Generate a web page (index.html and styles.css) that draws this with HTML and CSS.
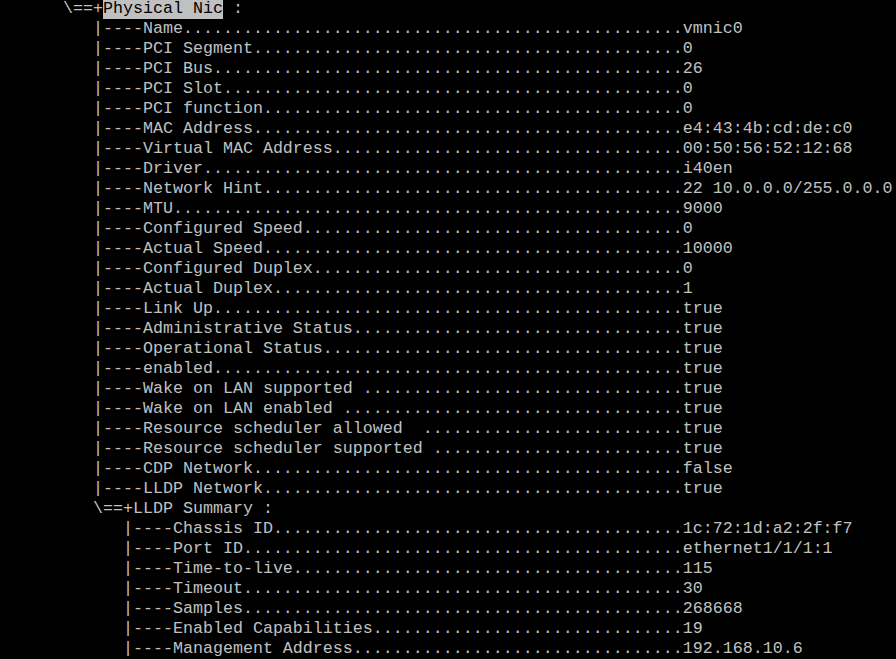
FILE: index.html
```html
<!DOCTYPE html>
<html>
<head>
<meta charset="utf-8">
<link rel="stylesheet" href="styles.css">
</head>
<body>
<div class="term">
<div class="ln">      \==+<span class="sel">Physical Nic</span> :</div>
<div class="ln">         |----Name..................................................vmnic0</div>
<div class="ln">         |----PCI Segment...........................................0</div>
<div class="ln">         |----PCI Bus...............................................26</div>
<div class="ln">         |----PCI Slot..............................................0</div>
<div class="ln">         |----PCI function..........................................0</div>
<div class="ln">         |----MAC Address...........................................e4:43:4b:cd:de:c0</div>
<div class="ln">         |----Virtual MAC Address...................................00:50:56:52:12:68</div>
<div class="ln">         |----Driver................................................i40en</div>
<div class="ln">         |----Network Hint..........................................22 10.0.0.0/255.0.0.0</div>
<div class="ln">         |----MTU...................................................9000</div>
<div class="ln">         |----Configured Speed......................................0</div>
<div class="ln">         |----Actual Speed..........................................10000</div>
<div class="ln">         |----Configured Duplex.....................................0</div>
<div class="ln">         |----Actual Duplex.........................................1</div>
<div class="ln">         |----Link Up...............................................true</div>
<div class="ln">         |----Administrative Status.................................true</div>
<div class="ln">         |----Operational Status....................................true</div>
<div class="ln">         |----enabled...............................................true</div>
<div class="ln">         |----Wake on LAN supported ................................true</div>
<div class="ln">         |----Wake on LAN enabled ..................................true</div>
<div class="ln">         |----Resource scheduler allowed  ..........................true</div>
<div class="ln">         |----Resource scheduler supported .........................true</div>
<div class="ln">         |----CDP Network...........................................false</div>
<div class="ln">         |----LLDP Network..........................................true</div>
<div class="ln">         \==+LLDP Summary :</div>
<div class="ln">            |----Chassis ID.........................................1c:72:1d:a2:2f:f7</div>
<div class="ln">            |----Port ID............................................ethernet1/1/1:1</div>
<div class="ln">            |----Time-to-live.......................................115</div>
<div class="ln">            |----Timeout............................................30</div>
<div class="ln">            |----Samples............................................268668</div>
<div class="ln">            |----Enabled Capabilities...............................19</div>
<div class="ln">            |----Management Address.................................192.168.10.6</div>
</div>
</body>
</html>
```
FILE: styles.css
```css
html, body {
  margin: 0;
  padding: 0;
  background: #000;
  overflow: hidden;
}
.term {
  margin-top: -1px;
  padding-left: 3px;
  font-family: "Liberation Mono", "Courier New", monospace;
  font-size: 16.6667px;
  color: #c0c0c0;
}
.ln {
  height: 20px;
  line-height: 20px;
  white-space: pre;
}
.sel {
  display: inline-block;
  background: #c0c0c0;
  color: #000;
}
```
